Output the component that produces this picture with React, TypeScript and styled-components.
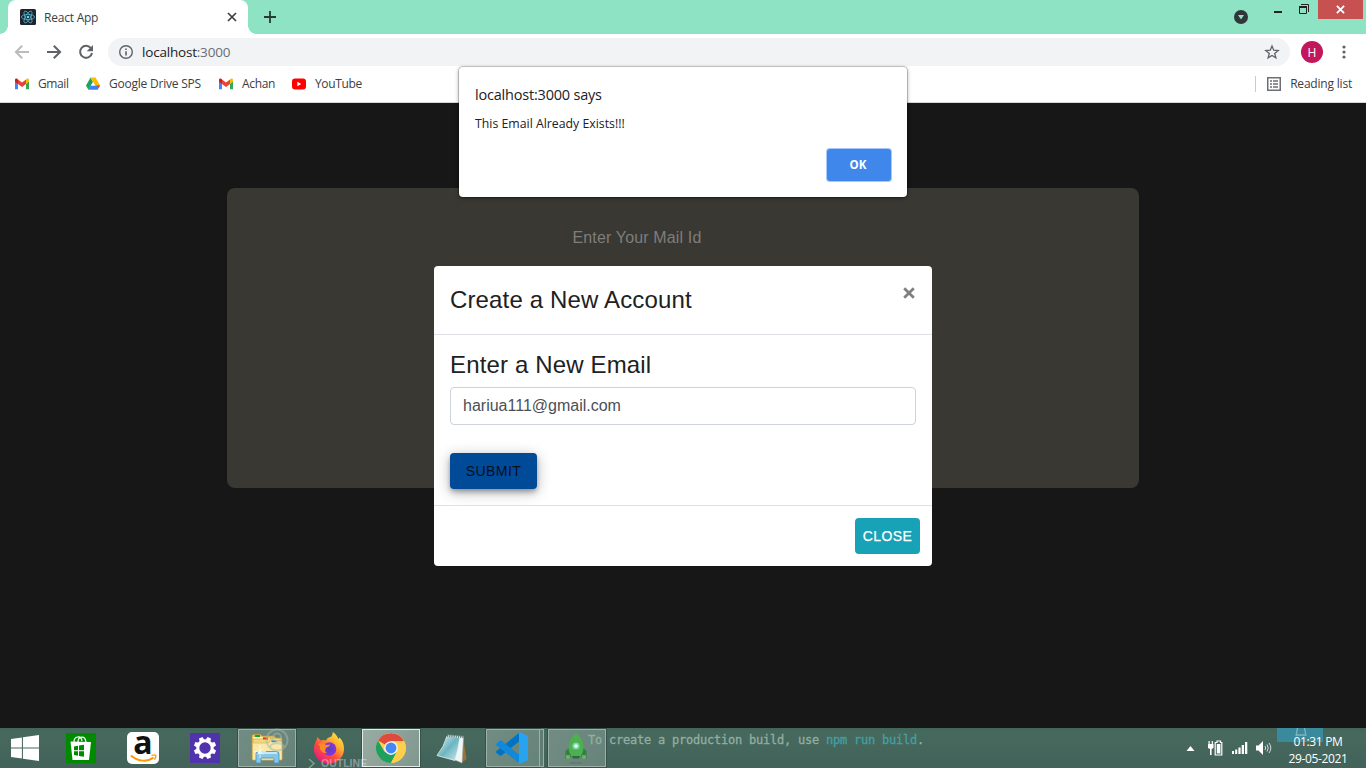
import React from "react";
import styled, { createGlobalStyle } from "styled-components";

const ui = `"Open Sans", "Noto Sans", sans-serif`;
const arial = `"Liberation Sans", Arial, sans-serif`;

const GlobalStyle = createGlobalStyle`
  *, *::before, *::after { box-sizing: border-box; }
  body { margin: 0; overflow: hidden; font-family: ${ui}; }
  svg { display: block; flex: none; }
  h4 { margin: 0; font-weight: 400; }
  button { border: 0; padding: 0; font-family: inherit; }
`;

const Desktop = styled.div`
  position: relative;
  display: flex;
  flex-direction: column;
  width: 1366px;
  height: 768px;
  overflow: hidden;
  background: #171717;
`;

/* ---------- browser chrome ---------- */

const TabStrip = styled.header`
  display: flex;
  height: 34px;
  padding-left: 8px;
  background: #8de3c3;
`;

const Tab = styled.div`
  position: relative;
  display: flex;
  align-items: center;
  width: 240px;
  padding: 0 11px 0 12px;
  border-radius: 8px 8px 0 0;
  background: #fff;
  &::before, &::after {
    content: "";
    position: absolute;
    bottom: 0;
    width: 8px;
    height: 8px;
  }
  &::before {
    left: -8px;
    background: radial-gradient(circle at 0 0, #8de3c3 7.5px, #fff 8px);
  }
  &::after {
    right: -8px;
    background: radial-gradient(circle at 100% 0, #8de3c3 7.5px, #fff 8px);
  }
`;

const Label = styled.span<{ $size?: number; $track?: number; $color?: string }>`
  font-size: ${(p) => p.$size ?? 12}px;
  letter-spacing: ${(p) => p.$track ?? 0}px;
  color: ${(p) => p.$color ?? "#3c4043"};
  white-space: nowrap;
`;

const TabTitle = styled(Label)`
  flex: 1;
  margin-left: 8px;
`;

const NewTab = styled.div`
  margin: 11px 0 0 16px;
`;

const WindowControls = styled.div`
  display: flex;
  margin-left: auto;
  padding-right: 3px;
`;

const TabSearch = styled.div`
  margin: 10px 26px 0 0;
`;

const Minimise = styled.div`
  width: 8px;
  height: 2px;
  margin: 11px 17px 0 0;
  background: #222;
`;

const Restore = styled.div`
  margin: 4px 8px 0 0;
`;

const CloseWindow = styled.div`
  display: flex;
  align-items: center;
  justify-content: center;
  width: 45px;
  height: 19px;
  background: #c75050;
`;

const Toolbar = styled.div`
  display: flex;
  align-items: center;
  height: 36px;
  padding: 0 20px 0 14px;
  background: #fff;
`;

const NavIcons = styled.div`
  display: flex;
  gap: 16px;
  margin-right: 14px;
`;

const Omnibox = styled.div`
  display: flex;
  align-items: center;
  flex: 1;
  height: 28px;
  padding: 0 10px 0 10px;
  border-radius: 14px;
  background: #f1f3f4;
`;

const Url = styled(Label)`
  flex: 1;
  margin-left: 8px;
  span { color: #6a6e73; }
`;

const Avatar = styled.div`
  display: flex;
  align-items: center;
  justify-content: center;
  width: 22px;
  height: 22px;
  margin: 0 19px 0 11px;
  border-radius: 50%;
  background: #c2185b;
  color: #fff;
  font-size: 12px;
`;

const Bookmarks = styled.nav`
  display: flex;
  align-items: center;
  height: 33px;
  padding: 0 14px 5px 14px;
  border-bottom: 1px solid #d5d7d9;
  background: #fff;
`;

const Bookmark = styled.div<{ $width: number }>`
  display: flex;
  align-items: center;
  gap: 8px;
  width: ${(p) => p.$width}px;
`;

const ReadingList = styled.div`
  display: flex;
  align-items: center;
  gap: 9px;
  height: 16px;
  margin-left: auto;
  padding-left: 11px;
  border-left: 1px solid #c9ccd0;
`;

/* ---------- page ---------- */

const Page = styled.main`
  display: flex;
  justify-content: center;
  align-items: flex-start;
  height: 625px;
  padding-top: 85px;
  background: #171717;
`;

const LoginCard = styled.section`
  width: 912px;
  height: 300px;
  padding: 39px 0 0 345.5px;
  border-radius: 8px;
  background: #393832;
  color: #7e7e7c;
  font: 16px/21px ${arial};
  letter-spacing: 0.15px;
`;

const Modal = styled.section`
  position: absolute;
  left: 434px;
  top: 266px;
  display: flex;
  flex-direction: column;
  width: 498px;
  height: 300px;
  border-radius: 4px;
  background: #fff;
  color: #212121;
  font-family: ${arial};
`;

const ModalHeader = styled.div`
  display: flex;
  justify-content: space-between;
  height: 69px;
  padding: 16px;
  border-bottom: 1px solid #dee2e6;
`;

const Heading = styled.h4`
  font-size: 24px;
  line-height: 36px;
  letter-spacing: 0.15px;
`;

const Dismiss = styled.div`
  padding-top: 5px;
  margin-right: 1px;
`;

const ModalBody = styled.div`
  display: flex;
  flex-direction: column;
  align-items: flex-start;
  height: 170px;
  padding: 12px 16px;
`;

const EmailField = styled.div`
  width: 466px;
  height: 38px;
  margin: 4px 0 28px;
  padding: 0 12px;
  border: 1px solid #ced4da;
  border-radius: 4px;
  color: #495057;
  font-size: 16px;
  line-height: 36px;
`;

const ActionButton = styled.button<{ $tone: "submit" | "close" }>`
  height: 36px;
  width: ${(p) => (p.$tone === "submit" ? 87 : 65)}px;
  border-radius: 4px;
  background: ${(p) => (p.$tone === "submit" ? "#004a98" : "#17a2b8")};
  color: ${(p) => (p.$tone === "submit" ? "#06101c" : "#fff")};
  box-shadow: ${(p) =>
    p.$tone === "submit"
      ? "0 2px 4px -1px rgba(0,0,0,.2), 0 4px 5px rgba(0,0,0,.14), 0 3px 14px rgba(0,0,0,.3)"
      : "none"};
  font: 14px/36px ${arial};
  letter-spacing: 0.4px;
  -webkit-text-stroke: ${(p) => (p.$tone === "submit" ? "0" : "0.25px #fff")};
`;

const ModalFooter = styled.div`
  display: flex;
  justify-content: flex-end;
  flex: 1;
  padding: 12px;
  border-top: 1px solid #dee2e6;
`;

const Alert = styled.section`
  position: absolute;
  left: 459px;
  top: 67px;
  display: flex;
  flex-direction: column;
  width: 448px;
  height: 130px;
  padding: 17px 16px 16px;
  border-radius: 4px;
  background: #fff;
  box-shadow: 0 0 0 1px rgba(0, 0, 0, 0.17), 0 1px 4px rgba(0, 0, 0, 0.4);
`;

const AlertTitle = styled(Label)`
  line-height: 22px;
`;

const AlertText = styled(Label)`
  margin-top: 9px;
  line-height: 18px;
`;

const OkButton = styled.button`
  align-self: flex-end;
  width: 64px;
  height: 32px;
  margin-top: auto;
  border-radius: 3px;
  background: #3f87ea;
  box-shadow: 0 0 0 1px #a5c8f8;
  color: #fff;
  font: 700 11.5px/32px ${ui};
  padding-right: 2px;
`;

/* ---------- taskbar ---------- */

const Taskbar = styled.footer`
  position: relative;
  display: flex;
  height: 40px;
  background: linear-gradient(#40665a, #47695d 15%, #42625a);
`;

const Start = styled.div`
  display: flex;
  align-items: center;
  width: 52px;
  padding: 0 0 1px 11px;
`;

const Apps = styled.div`
  display: flex;
  gap: 4px;
  padding: 1px 0;
`;

const AppSlot = styled.div<{ $state?: "open" | "active"; $shift?: number }>`
  display: flex;
  align-items: center;
  justify-content: center;
  width: 58px;
  height: 38px;
  padding-right: ${(p) => p.$shift ?? 0}px;
  border: ${(p) =>
    p.$state === "active" ? "1px solid #e4ebe7" : p.$state ? "1px solid #9db0a8" : "0"};
  outline: ${(p) => (p.$state ? "1px solid #34524a" : "none")};
  background: ${(p) =>
    p.$state === "active"
      ? "linear-gradient(120deg, #9aaca4, #7f978e)"
      : p.$state
      ? "linear-gradient(120deg, #728c82, #66837a)"
      : "transparent"};
`;

const StackedApp = styled(AppSlot)`
  width: 54px;
`;

const StackEdge = styled.div`
  width: 4px;
  height: 38px;
  margin-left: -4px;
  border: 1px solid #9db0a8;
  border-left: 0;
  background: #5f7d72;
`;

const Ghost = styled.div<{ $x: number; $y: number }>`
  position: absolute;
  left: ${(p) => p.$x}px;
  top: ${(p) => p.$y}px;
  white-space: pre;
  color: rgba(255, 255, 255, 0.38);
`;

const Terminal = styled(Ghost)`
  font: 12px/16px "DejaVu Sans Mono", monospace;
  letter-spacing: -0.224px;
  color: #93aea3;
  -webkit-text-stroke: 0.3px;
  span { color: #42a0a6; }
`;

const Outline = styled(Ghost)`
  font: 700 10.5px/10px ${arial};
  letter-spacing: 0;
`;

const Highlight = styled(Ghost)`
  width: 46px;
  height: 14px;
  background: #3a8a9d;
`;

const Tray = styled.div`
  position: relative;
  display: flex;
  align-items: center;
  gap: 8px;
  margin-left: auto;
`;

const TrayArrow = styled.div`
  margin-right: 5px;
`;

const Clock = styled.div`
  display: flex;
  flex-direction: column;
  align-items: center;
  width: 86px;
  line-height: 17px;
  padding: 3px 10px 0 0;
`;

/* ---------- drawings ---------- */

const ReactIcon = () => (
  <svg width="16" height="16" viewBox="0 0 16 16">
    <rect width="16" height="16" rx="1.5" fill="#20232a" />
    <g fill="none" stroke="#4fb4d0" strokeWidth=".8">
      <ellipse cx="8" cy="8" rx="6.6" ry="2.6" />
      <ellipse cx="8" cy="8" rx="6.6" ry="2.6" transform="rotate(60 8 8)" />
      <ellipse cx="8" cy="8" rx="6.6" ry="2.6" transform="rotate(120 8 8)" />
    </g>
    <circle cx="8" cy="8" r="1.3" fill="#61dafb" />
  </svg>
);

const Cross = ({ size, color, width }: { size: number; color: string; width: number }) => (
  <svg width={size} height={size} viewBox="0 0 10 10">
    <path d="M1 1l8 8M9 1L1 9" stroke={color} strokeWidth={width} />
  </svg>
);

const GmailIcon = () => (
  <svg width="16" height="16" viewBox="0 0 16 16">
    <path d="M1 5v8.2h3V7.8L1 5z" fill="#4285f4" />
    <path d="M15 5v8.2h-3V7.8L15 5z" fill="#34a853" />
    <path d="M12 3.4V8l3-2.3V4c0-1.6-1.5-1.900-2.400-1.100z" fill="#fbbc04" />
    <path d="M4 8V3.400l4 3 4-3V8l-4 3z" fill="#ea4335" />
    <path d="M1 4v1.700L4 8V3.400l-.6-.5C2.500 2.100 1 2.400 1 4z" fill="#c5221f" />
  </svg>
);

const DriveIcon = () => (
  <svg width="16" height="16" viewBox="0 0 16 16">
    <path d="M5.500 1.500L1 9.500l2.400 4.300L8 5.900z" fill="#1ea35a" />
    <path d="M5.500 1.500h5L15 9.600h-4.800z" fill="#ffba00" />
    <path d="M3.400 13.800L5.700 9.600H15l-2.300 4.200z" fill="#3b82f4" />
    <path d="M15 9.600l-1.200 2.200-2.600-2.200z" fill="#ea4335" />
    <path d="M8 6.200l2 3.400H6z" fill="#fff" />
  </svg>
);

const YouTubeIcon = () => (
  <svg width="16" height="16" viewBox="0 0 16 16">
    <rect x="1" y="2.500" width="14" height="11" rx="3" fill="#f00" />
    <path d="M6.400 5.800v4.400L10.200 8z" fill="#fff" />
  </svg>
);

const BackIcon = ({ color, flip }: { color: string; flip?: boolean }) => (
  <svg width="16" height="16" viewBox="0 0 16 16">
    <path
      transform={flip ? "matrix(-1 0 0 1 16 0)" : undefined}
      d="M15 8H2.500M8.200 1.700L1.900 8l6.300 6.300"
      fill="none"
      stroke={color}
      strokeWidth="2"
    />
  </svg>
);

const ReloadIcon = () => (
  <svg width="16" height="16" viewBox="0 0 16 16">
    <path d="M13.100 4.500A6 6 0 1 0 14 9" fill="none" stroke="#5f6368" strokeWidth="2" />
    <path d="M15 1v6.300H8.700z" fill="#5f6368" />
  </svg>
);

const InfoIcon = () => (
  <svg width="16" height="16" viewBox="0 0 16 16">
    <circle cx="8" cy="8" r="6.300" fill="none" stroke="#5f6368" strokeWidth="1.400" />
    <path d="M8 7.200v4.300M8 4.500v1.500" stroke="#5f6368" strokeWidth="1.600" />
  </svg>
);

const StarIcon = () => (
  <svg width="16" height="16" viewBox="0 0 16 16">
    <path
      d="M8 2l1.700 4.200 4.500.3-3.500 2.900 1.200 4.400L8 11.400l-3.900 2.400 1.200-4.400L1.800 6.500l4.500-.3z"
      fill="none"
      stroke="#5f6368"
      strokeWidth="1.300"
    />
  </svg>
);

const MenuIcon = () => (
  <svg width="4" height="16" viewBox="0 0 4 16" fill="#5f6368">
    <circle cx="2" cy="3" r="1.600" />
    <circle cx="2" cy="8" r="1.600" />
    <circle cx="2" cy="13" r="1.600" />
  </svg>
);

const ListIcon = () => (
  <svg width="14" height="14" viewBox="0 0 14 14">
    <rect x=".75" y=".75" width="12.500" height="12.500" fill="none" stroke="#6c7075" strokeWidth="1.500" />
    <path d="M3 4h2M3 7h2M3 10h2M6 4h5M6 7h5M6 10h5" stroke="#6c7075" strokeWidth="1.300" />
  </svg>
);

const SearchTabsIcon = () => (
  <svg width="14" height="14" viewBox="0 0 14 14">
    <circle cx="7" cy="7" r="7" fill="#303639" />
    <path d="M4 5h6L7 9.500z" fill="#8de3c3" />
  </svg>
);

const RestoreIcon = () => (
  <svg width="11" height="10" viewBox="0 0 11 10" fill="none" stroke="#222">
    <path d="M2 .5h7.500V8" />
    <path d="M.5 2v7.500h7V2M0 2.500h8M0 3.500h8" />
  </svg>
);

const WindowsIcon = () => (
  <svg width="28" height="26" viewBox="0 0 27 26" preserveAspectRatio="none" fill="#fff">
    <path d="M0 4l10.500-1.500v10H0zM11.500 2.300L27 0v12.500H11.500zM0 13.500h10.500v10L0 22zM11.500 13.500H27V26l-15.500-2.300z" />
  </svg>
);

const StoreIcon = () => (
  <svg width="30" height="30" viewBox="0 0 30 30">
    <rect width="30" height="30" fill="#008a00" />
    <path d="M8 9c0-6 7-7 8-1M12 9c0-6 7-7 8 0" fill="none" stroke="#fff" strokeWidth="1.200" />
    <path d="M4.500 8.500l20.500.5-2 18H6.500z" fill="#fff" />
    <path d="M8 13.500l4-.7v4.500H8zM13 12.600l5-.8v5.500h-5zM8 18.300h4v4.500l-4-.7zM13 18.300h5v5.500l-5-.8z" fill="#008a00" />
  </svg>
);

const AmazonMark = styled.div`
  display: flex;
  flex-direction: column;
  align-items: center;
  width: 32px;
  height: 32px;
  border-radius: 5px;
  background: #fff;
  color: #111;
  font: 700 32px/22px ${ui};
  span {
    height: 23px;
    margin-top: -1px;
  }
`;

const AmazonIcon = () => (
  <AmazonMark>
    <span>a</span>
    <svg width="28" height="8" viewBox="1 21 28 8">
      <path d="M3 22.500c7 6.500 17 6.500 22.500 2" fill="none" stroke="#f90" strokeWidth="2" />
      <path d="M23.500 22.500c2-.7 3.500-.7 4.300-.2.200 1.500-.5 3-1.300 4.300" fill="none" stroke="#f90" strokeWidth="1.300" />
    </svg>
  </AmazonMark>
);

const GearIcon = () => (
  <svg width="30" height="30" viewBox="-15 -15 30 30">
    <rect x="-15" y="-15" width="30" height="30" fill="#5133ab" />
    {[22.5, 67.5, 112.5, 157.5, 202.5, 247.5, 292.5, 337.5].map((a) => (
      <path key={a} d="M-2.500-7.500l.6-3.700h3.800l.6 3.700z" fill="#fff" transform={`rotate(${a})`} />
    ))}
    <circle r="7.200" fill="none" stroke="#fff" strokeWidth="3" />
  </svg>
);

const ExplorerIcon = () => (
  <svg width="34" height="34" viewBox="0 0 34 34">
    <path d="M2 5q0-1.500 1.500-1.500h7L12 5h12l2 2h5q1 0 1 1v20H2z" fill="#e8c35c" stroke="#c39a3c" strokeWidth=".6" />
    <path d="M3 6h10l1 2h17v5H3z" fill="#fff3c2" />
    <rect x="5" y="4" width="5" height="2" fill="#0fa82e" />
    <path d="M3 10V8h9l2-2h6l1.500 3H31v20H3z" fill="#f2d77e" stroke="#c8a145" strokeWidth=".6" />
    <rect x="13" y="6.500" width="5" height="2" fill="#d23a1f" />
    <path d="M2.500 12H19l1.500-2.500H30L32 12v16q0 1-1 1H3.500q-1 0-1-1z" fill="#f9e9a9" stroke="#d5b35a" strokeWidth=".6" />
    <rect x="21.500" y="9.500" width="5" height="1.700" fill="#2a8bd8" />
    <path d="M6 32v-9q0-2.500 2.500-2.500h18q2.500 0 2.500 2.500v9h-5v-4q0-1-1-1H12q-1 0-1 1v4z" fill="#86c6e8" stroke="#4d91bd" strokeWidth=".8" />
    <path d="M8 22h19" stroke="#dcf3ff" strokeWidth="1.500" />
    <path d="M10 14v13M4 20.500h12M7 17.500l6 6M13 17.500l-6 6" stroke="#fff" strokeWidth=".7" />
  </svg>
);

const FirefoxIcon = () => (
  <svg width="32" height="32" viewBox="0 0 32 32">
    <defs>
      <linearGradient id="ffBody" x1="1" y1="0" x2="0.200" y2="1">
        <stop offset="0" stopColor="#fff44f" />
        <stop offset=".35" stopColor="#ffb52e" />
        <stop offset=".65" stopColor="#ff4f3a" />
        <stop offset="1" stopColor="#e31587" />
      </linearGradient>
      <radialGradient id="ffGlobe">
        <stop offset="0" stopColor="#5a3fc0" />
        <stop offset="1" stopColor="#8a35dc" />
      </radialGradient>
    </defs>
    <path
      d="M3.500 8l1-3 3 3.500c2-.8 4-.6 5.500 0 1-2 2.500-3 4-3.400C19 5 19.600 2 19.800 0c3 2 4.500 4 5.500 7l1.400-1.500C30 9 31 13 31 17c0 8-6.500 14.500-15 14.500S1 25.500 1 17c0-3.500 1-6.500 2.500-9z"
      fill="url(#ffBody)"
    />
    <circle cx="16.500" cy="17" r="6.800" fill="url(#ffGlobe)" />
    <path d="M5 12c3-2 6-1 8 1l4-.5c0 2-3 2.500-4 3.500-1.500 3-1 4 1 5-4 1-8-3-7-7z" fill="#ff8a28" />
  </svg>
);

const ChromeIcon = () => (
  <svg width="30" height="30" viewBox="0 0 48 48">
    <circle cx="24" cy="24" r="24" fill="#fdd04b" />
    <path d="M24 24L3.200 12A24 24 0 0 1 44.800 13H24z" fill="#dd4b3e" />
    <path d="M3.200 12A24 24 0 0 0 24 48l9.500-18.500L24 24 13.600 30z" fill="#1fa05f" />
    <path d="M24 13h20.800A24 24 0 0 1 24 48l9.500-18.500z" fill="#fdd04b" />
    <circle cx="24" cy="24" r="11" fill="#f3f5f5" />
    <circle cx="24" cy="24" r="8.700" fill="#4486f4" />
  </svg>
);

const NotepadIcon = () => (
  <svg width="32" height="32" viewBox="0 0 32 32">
    <defs>
      <linearGradient id="paper" x1="0" y1="0" x2="1" y2="1">
        <stop offset="0" stopColor="#dff3f5" />
        <stop offset=".5" stopColor="#6cb5c1" />
        <stop offset="1" stopColor="#d2eaed" />
      </linearGradient>
    </defs>
    <path d="M27 5l3.500 22-5 4z" fill="#9a7436" />
    <path d="M12 3l15.500 1.500L26 31l-7-3z" fill="#f1f5f5" stroke="#9fb1b1" strokeWidth=".5" />
    <path d="M11 4l13 1.500q-2 13-5 23L1 23.500Q8 15 11 4z" fill="url(#paper)" stroke="#e9f4f4" strokeWidth=".8" />
    <path d="M11 3.500l17 1.500" stroke="#657b7b" strokeWidth="2.500" strokeDasharray="1.200 1" />
  </svg>
);

const CodeIcon = () => (
  <svg width="34" height="32" viewBox="0 0 34 32">
    <path d="M24 1v8.500L6.500 23.500q-1 .7-2 0L1.500 21q-1-1 0-2z" fill="#0074c4" />
    <path d="M1.500 11.500l3-2.700q1-.8 2 0L24 22.500V31L1.500 13.500q-1-1 0-2z" fill="#1189d8" />
    <path d="M24 0l8 3.500q1 .5 1 1.500v22q0 1-1 1.500L24 32q-1 .2-1.800-.7 1.800.7 1.800-1.300V2q0-2-1.800-1.300Q23-.2 24 0z" fill="#27a3f2" />
  </svg>
);

const RocketIcon = () => (
  <svg width="24" height="31" viewBox="0 0 24 31">
    <path d="M6 14L1.500 18v8h4l2-4zM18 14l4.500 4v8h-4l-2-4z" fill="#347d45" />
    <rect x="2" y="22" width="4" height="4" rx="1" fill="#6fae62" />
    <rect x="18" y="22" width="4" height="4" rx="1" fill="#6fae62" />
    <path d="M12 0c7 6 10 14 5 23H7C2 14 5 6 12 0z" fill="#4caf50" />
    <path d="M8 23h8l-1 2.500H9z" fill="#2d6c3c" />
    <circle cx="12" cy="13" r="3.600" fill="#7ed6a4" />
    <circle cx="12" cy="13" r="1.800" fill="#e4fff0" />
    <path d="M6 30h12" stroke="#577063" />
  </svg>
);

const RingGhost = () => (
  <svg width="24" height="26" viewBox="0 0 24 26" fill="none" stroke="#a3b8ad" strokeOpacity=".5" strokeWidth="2">
    <circle cx="12" cy="12" r="10.500" />
    <circle cx="12" cy="9.500" r="4" />
    <path d="M5 19c1-5 13-5 14 0" />
  </svg>
);

const BatteryIcon = () => (
  <svg width="16" height="16" viewBox="0 0 16 16">
    <path d="M0 4h5.500v4L3.600 9v6H2V9L0 8zM.5 1h1.200v3H.5zM3.700 1h1.200v3H3.700z" fill="#fff" />
    <path d="M7.200 15V2.500H9V1h3.500v1.500h1.300V15z" fill="none" stroke="#fff" strokeWidth="1.200" />
    <rect x="8.800" y="4" width="3.600" height="9.500" fill="#fff" />
  </svg>
);

const SignalIcon = () => (
  <svg width="16" height="12" viewBox="0 0 16 12" fill="#fff">
    <path d="M0 9h2v3H0zM3.200 7.500h2V12h-2zM6.400 5.500h2.200V12H6.400zM9.700 3H12v9H9.700zM13 0h2.300v12H13z" />
  </svg>
);

const SoundIcon = () => (
  <svg width="16" height="14" viewBox="0 0 16 14">
    <path d="M0 4.500h2.500L7 0v14L2.500 9.500H0z" fill="#fff" />
    <path d="M9 5q1.300 2 0 4M11 3.500q2.500 3.500 0 7M13 2q3.700 5 0 10" fill="none" stroke="#e4ebe8" strokeWidth=".9" />
  </svg>
);

const bookmarks = [
  { icon: <GmailIcon />, name: "Gmail", width: 71, track: -0.4 },
  { icon: <DriveIcon />, name: "Google Drive SPS", width: 133, track: -0.22 },
  { icon: <GmailIcon />, name: "Achan", width: 73, track: -0.35 },
  { icon: <YouTubeIcon />, name: "YouTube", width: 90, track: -0.35 },
];

export default function App() {
  return (
    <>
      <GlobalStyle />
      <Desktop>
        <TabStrip>
          <Tab>
            <ReactIcon />
            <TabTitle $track={-0.22}>React App</TabTitle>
            <Cross size={10} color="#3c4043" width={1.7} />
          </Tab>
          <NewTab>
            <svg width="12" height="12" viewBox="0 0 12 12">
              <path d="M6 0v12M0 6h12" stroke="#263a36" strokeWidth="1.800" />
            </svg>
          </NewTab>
          <WindowControls>
            <TabSearch><SearchTabsIcon /></TabSearch>
            <Minimise />
            <Restore><RestoreIcon /></Restore>
            <CloseWindow><Cross size={9} color="#fff" width={2} /></CloseWindow>
          </WindowControls>
        </TabStrip>
        <Toolbar>
          <NavIcons>
            <BackIcon color="#babcbe" />
            <BackIcon color="#5f6368" flip />
            <ReloadIcon />
          </NavIcons>
          <Omnibox>
            <InfoIcon />
            <Url $size={13.5} $track={-0.2} $color="#202124">
              localhost<span>:3000</span>
            </Url>
            <StarIcon />
          </Omnibox>
          <Avatar>H</Avatar>
          <MenuIcon />
        </Toolbar>
        <Bookmarks>
          {bookmarks.map((b) => (
            <Bookmark key={b.name} $width={b.width}>
              {b.icon}
              <Label $track={b.track}>{b.name}</Label>
            </Bookmark>
          ))}
          <ReadingList>
            <ListIcon />
            <Label $track={-0.2}>Reading list</Label>
          </ReadingList>
        </Bookmarks>

        <Page>
          <LoginCard>Enter Your Mail Id</LoginCard>
        </Page>

        <Taskbar>
          <Start><WindowsIcon /></Start>
          <Apps>
            <AppSlot><StoreIcon /></AppSlot>
            <AppSlot><AmazonIcon /></AppSlot>
            <AppSlot><GearIcon /></AppSlot>
            <AppSlot $state="open"><ExplorerIcon /></AppSlot>
            <AppSlot><FirefoxIcon /></AppSlot>
            <AppSlot $state="active"><ChromeIcon /></AppSlot>
            <AppSlot $shift={2}><NotepadIcon /></AppSlot>
            <StackedApp $state="open" $shift={2}><CodeIcon /></StackedApp>
            <StackEdge />
            <AppSlot $state="open" $shift={2}><RocketIcon /></AppSlot>
          </Apps>
          <Ghost $x={265} $y={0}><RingGhost /></Ghost>
          <Ghost $x={308} $y={31}>
            <svg width="7" height="9" viewBox="0 0 7 9">
              <path d="M1 0l5 4.500L1 9" fill="none" stroke="#86a297" strokeWidth="1.300" />
            </svg>
          </Ghost>
          <Outline $x={321} $y={30}>OUTLINE</Outline>
          <Terminal $x={588} $y={4}>
            To create a production build, use <span>npm run build</span>.
          </Terminal>
          <Highlight $x={1277} $y={0} />
          <Ghost $x={1295} $y={0}>
            <svg width="12" height="9" viewBox="0 0 12 9">
              <path d="M2.500 0L1 8M9.500 0L11 8M1 7h10" fill="none" stroke="#7fb5bb" strokeWidth="1.300" />
            </svg>
          </Ghost>
          <Tray>
            <TrayArrow>
              <svg width="9" height="5" viewBox="0 0 9 5"><path d="M4.500 0L8.500 5h-8z" fill="#fff" /></svg>
            </TrayArrow>
            <BatteryIcon />
            <SignalIcon />
            <SoundIcon />
            <Clock>
              <Label $color="#fff" $track={-0.35}>01:31 PM</Label>
              <Label $color="#fff" $track={-0.35}>29-05-2021</Label>
            </Clock>
          </Tray>
        </Taskbar>

        <Modal>
          <ModalHeader>
            <Heading>Create a New Account</Heading>
            <Dismiss><Cross size={12} color="#808080" width={2.3} /></Dismiss>
          </ModalHeader>
          <ModalBody>
            <Heading>Enter a New Email</Heading>
            <EmailField>hariua111@gmail.com</EmailField>
            <ActionButton $tone="submit">SUBMIT</ActionButton>
          </ModalBody>
          <ModalFooter>
            <ActionButton $tone="close">CLOSE</ActionButton>
          </ModalFooter>
        </Modal>

        <Alert>
          <AlertTitle $size={14.5} $track={-0.2} $color="#202124">localhost:3000 says</AlertTitle>
          <AlertText $size={12.3} $track={0} $color="#202124">This Email Already Exists!!!</AlertText>
          <OkButton>OK</OkButton>
        </Alert>
      </Desktop>
    </>
  );
}
